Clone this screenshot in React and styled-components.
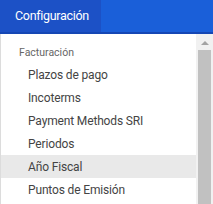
import * as React from 'react';
import styled, { createGlobalStyle } from 'styled-components';

const items = [
    'Plazos de pago',
    'Incoterms',
    'Payment Methods SRI',
    'Periodos',
    'Año Fiscal',
    'Puntos de Emisión',
];

export default function App() {
    const [active, setActive] = React.useState('Año Fiscal');

    return (
        <>
            <Global />
            <Page>
                <Bar>
                    <Tab>Configuración</Tab>
                </Bar>
                <Panel>
                    <List>
                        <Group>Facturación</Group>
                        {items.map((item) => (
                            <Item key={item} $active={item === active} onClick={() => setActive(item)}>
                                {item}
                            </Item>
                        ))}
                    </List>
                    <Scrollbar>
                        <Arrow />
                        <Thumb />
                    </Scrollbar>
                </Panel>
            </Page>
        </>
    );
}

//styling...

const Global = createGlobalStyle`
    html, body {
        margin: 0;
        padding: 0;
        background: #ffffff;
        font-family: Roboto, "Liberation Sans", sans-serif;
    }
`;

const Page = styled.div`
    width: 213px;
    height: 204px;
    display: flex;
    flex-direction: column;
    overflow: hidden;
`;

const Bar = styled.div`
    height: 32px;
    flex-shrink: 0;
    display: flex;
    background: #1a5fd9;
    border-bottom: 2px solid #1547b4;
`;

const Tab = styled.div`
    width: 101px;
    box-sizing: border-box;
    padding-left: 15px;
    padding-bottom: 1px;
    display: flex;
    align-items: center;
    background: #1c51c6;
    color: #ffffff;
    font-size: 12.5px;
    letter-spacing: -0.3px;
`;

const Panel = styled.div`
    flex: 1;
    display: flex;
    border-left: 1px solid #dcdcdc;
    background: #ffffff;
`;

const List = styled.div`
    flex: 1;
    padding-top: 8px;
`;

const Group = styled.div`
    height: 21px;
    display: flex;
    align-items: center;
    padding-left: 18px;
    color: #666666;
    font-size: 10.5px;
`;

const Item = styled.div`
    height: 23px;
    display: flex;
    align-items: center;
    padding-left: 27px;
    color: #444444;
    font-size: 12px;
    letter-spacing: -0.15px;
    background: ${(p) => (p.$active ? '#e9e9e9' : 'transparent')};
    cursor: pointer;
`;

const Scrollbar = styled.div`
    width: 17px;
    display: flex;
    flex-direction: column;
    align-items: center;
    background: #f1f1f1;
`;

const Arrow = styled.div`
    margin: 7px 0 5px;
    width: 0;
    height: 0;
    border-left: 4px solid transparent;
    border-right: 4px solid transparent;
    border-bottom: 4px solid #a3a3a3;
`;

const Thumb = styled.div`
    flex: 1;
    width: 13px;
    background: #c1c1c1;
`;
